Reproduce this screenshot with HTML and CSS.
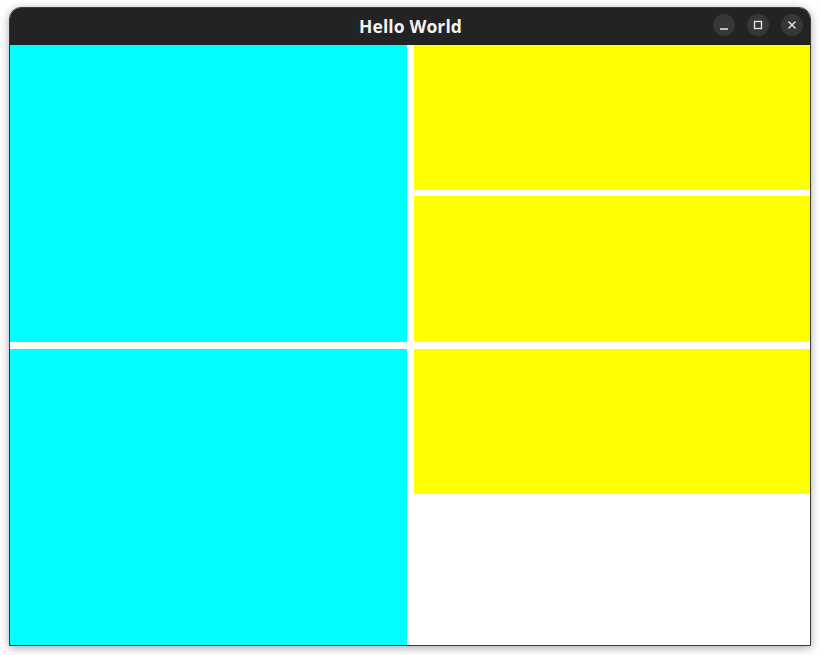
FILE: index.html
```html
<!DOCTYPE html>
<html>
<head>
<meta charset="utf-8">
<link rel="stylesheet" href="styles.css">
</head>
<body>
<div class="window">
  <div class="titlebar">
    <span class="title">Hello World</span>
    <div class="controls">
      <span class="btn"><svg width="22" height="22" viewBox="0 0 22 22"><line x1="7" y1="15" x2="15" y2="15" stroke="#e8e8e8" stroke-width="1.3"/></svg></span>
      <span class="btn"><svg width="22" height="22" viewBox="0 0 22 22"><rect x="7.5" y="7.5" width="7" height="7" fill="none" stroke="#e8e8e8" stroke-width="1.3"/></svg></span>
      <span class="btn"><svg width="22" height="22" viewBox="0 0 22 22"><path d="M7.5 7.5 L14.5 14.5 M14.5 7.5 L7.5 14.5" stroke="#e8e8e8" stroke-width="1.4"/></svg></span>
    </div>
  </div>
  <div class="content">
    <div class="col left">
      <div class="cyan c1"></div>
      <div class="cyan c2"></div>
    </div>
    <div class="col right">
      <div class="yellow y1"></div>
      <div class="yellow y2"></div>
      <div class="yellow y3"></div>
    </div>
  </div>
</div>
</body>
</html>
```
FILE: styles.css
```css
html, body {
  margin: 0;
  padding: 0;
  background: #ffffff;
}
body {
  width: 820px;
  height: 655px;
  overflow: hidden;
}
.window {
  margin: 7px 0 0 9px;
  width: 800px;
  border: 1px solid #3a3a3a;
  border-radius: 12px 12px 0 0;
  overflow: hidden;
  box-shadow: 0 2px 10px rgba(0,0,0,0.35);
  background: #ffffff;
}
.titlebar {
  height: 37px;
  background: #232323;
  position: relative;
  display: flex;
  align-items: center;
  justify-content: center;
}
.title {
  font-family: "Open Sans", "DejaVu Sans", sans-serif;
  font-weight: 700;
  font-size: 17.5px;
  color: #f2f2f2;
  letter-spacing: 0.1px;
  margin-left: 1px;
  margin-bottom: 2px;
}
.controls {
  position: absolute;
  right: 7px;
  top: 6px;
  display: flex;
  gap: 12px;
}
.btn {
  width: 22px;
  height: 22px;
  border-radius: 50%;
  background: #373737;
  display: block;
}
.btn svg { display: block; }
.content {
  display: flex;
  gap: 7px;
  height: 600px;
}
.col {
  display: flex;
  flex-direction: column;
}
.left { width: 397px; gap: 7px; }
.right { width: 396px; }
.cyan { background: #00ffff; }
.c1 { height: 297px; }
.c2 { height: 296px; }
.yellow { background: #ffff00; }
.y1 { height: 145px; }
.y2 { height: 146px; margin-top: 6px; }
.y3 { height: 145px; margin-top: 7px; }
```
